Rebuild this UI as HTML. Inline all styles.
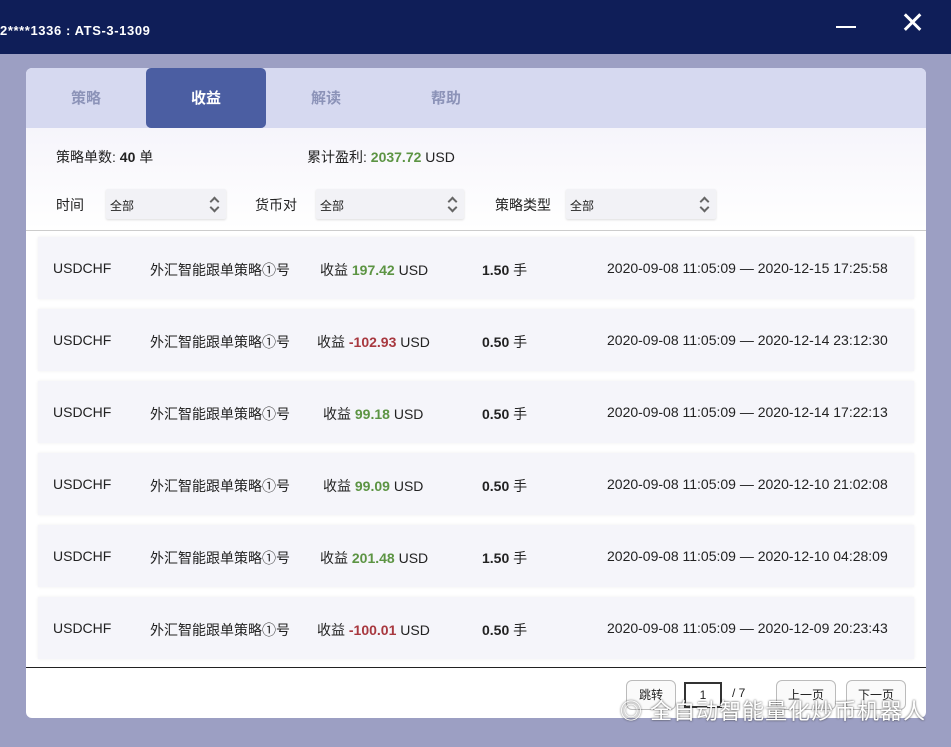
<!DOCTYPE html>
<html><head><meta charset="utf-8"><style>
*{margin:0;padding:0;box-sizing:border-box}
body{width:951px;height:747px;background:#9c9fc3;font-family:"Liberation Sans","Noto Sans CJK SC",sans-serif;position:relative;overflow:hidden;color:#222}
.top{position:absolute;left:0;top:0;width:951px;height:54px;background:#0f1e58;color:#fff;font-weight:bold;font-size:13px}
.top .t{position:absolute;left:0;top:23px;letter-spacing:0.6px}
.panel{position:absolute;left:26px;top:68px;width:900px;height:650px;background:#fff;border-radius:6px;overflow:hidden}
.tabs{height:60px;background:#d6d9f0;position:relative}
.tab{position:absolute;top:0;width:120px;height:60px;line-height:62px;text-align:center;color:#8c93b8;font-size:15px;font-weight:bold}
.tab.a{background:#4b5ea2;color:#fff;border-radius:5px}
.abs{position:absolute;font-size:14px}
.sel{position:absolute;top:121px;width:150px;height:30px;background:#f2f2f6;border-radius:2px;font-size:12px;padding:8px 4px;box-shadow:0 1px 2px #ddd}
.sel:after{content:"";position:absolute;right:8px;top:9px;width:5px;height:5px;border-left:2px solid #666;border-top:2px solid #666;transform:rotate(45deg)}
.sel:before{content:"";position:absolute;right:8px;top:15px;width:5px;height:5px;border-right:2px solid #666;border-bottom:2px solid #666;transform:rotate(45deg)}
.hdr{position:absolute;left:0;top:60px;width:900px;height:102px;background:linear-gradient(#f6f5fb,#fff)}
.row{position:absolute;left:12px;width:876px;height:62px;background:#f5f5fa;font-size:14px;box-shadow:0 0 3px #eee}
.row span{position:absolute;top:23px}
.g{color:#5c9443;font-weight:bold}.r{color:#a8383f;font-weight:bold}
.line{position:absolute;left:0;top:599px;width:900px;height:1px;background:#222}
.btn{position:absolute;top:612px;height:30px;border:1px solid #bbb;border-radius:6px;background:#fafafa;font-size:12px;text-align:center;line-height:28px}
.wm{position:absolute;left:620px;top:694px;font-size:22px;color:#fff;text-shadow:0 0 2px #333;letter-spacing:1px}
</style></head><body>
<div class="top"><span class="t">2****1336 : ATS-3-1309</span>
<span style="position:absolute;left:836px;top:26px;width:20px;height:2px;background:#fff"></span>
<span style="position:absolute;left:900px;top:6px;font-size:30px;font-weight:normal">✕</span></div>
<div class="panel">
<div class="tabs">
<div class="tab" style="left:0">策略</div>
<div class="tab a" style="left:120px">收益</div>
<div class="tab" style="left:240px">解读</div>
<div class="tab" style="left:360px">帮助</div>
</div>
<div class="hdr"></div>
<div class="abs" style="left:30px;top:79px">策略单数: <b>40</b> 单</div>
<div class="abs" style="left:281px;top:79px">累计盈利: <span class="g">2037.72</span> USD</div>
<div class="abs" style="left:30px;top:127px">时间</div>
<div class="sel" style="left:80px;width:120px">全部</div>
<div class="abs" style="left:229px;top:127px">货币对</div>
<div class="sel" style="left:290px;width:148px">全部</div>
<div class="abs" style="left:469px;top:127px">策略类型</div>
<div class="sel" style="left:540px">全部</div>
<div style="position:absolute;left:0;top:162px;width:900px;height:1px;background:#ccc"></div>

<div class="row" style="top:169px"><span style="left:15px">USDCHF</span><span style="left:112px">外汇智能跟单策略①号</span><span style="left:282px">收益 <b class="g">197.42</b> USD</span><span style="left:444px"><b>1.50</b> 手</span><span style="left:569px">2020-09-08 11:05:09 — 2020-12-15 17:25:58</span></div>
<div class="row" style="top:241px"><span style="left:15px">USDCHF</span><span style="left:112px">外汇智能跟单策略①号</span><span style="left:279px">收益 <b class="r">-102.93</b> USD</span><span style="left:444px"><b>0.50</b> 手</span><span style="left:569px">2020-09-08 11:05:09 — 2020-12-14 23:12:30</span></div>
<div class="row" style="top:313px"><span style="left:15px">USDCHF</span><span style="left:112px">外汇智能跟单策略①号</span><span style="left:285px">收益 <b class="g">99.18</b> USD</span><span style="left:444px"><b>0.50</b> 手</span><span style="left:569px">2020-09-08 11:05:09 — 2020-12-14 17:22:13</span></div>
<div class="row" style="top:385px"><span style="left:15px">USDCHF</span><span style="left:112px">外汇智能跟单策略①号</span><span style="left:285px">收益 <b class="g">99.09</b> USD</span><span style="left:444px"><b>0.50</b> 手</span><span style="left:569px">2020-09-08 11:05:09 — 2020-12-10 21:02:08</span></div>
<div class="row" style="top:457px"><span style="left:15px">USDCHF</span><span style="left:112px">外汇智能跟单策略①号</span><span style="left:282px">收益 <b class="g">201.48</b> USD</span><span style="left:444px"><b>1.50</b> 手</span><span style="left:569px">2020-09-08 11:05:09 — 2020-12-10 04:28:09</span></div>
<div class="row" style="top:529px"><span style="left:15px">USDCHF</span><span style="left:112px">外汇智能跟单策略①号</span><span style="left:279px">收益 <b class="r">-100.01</b> USD</span><span style="left:444px"><b>0.50</b> 手</span><span style="left:569px">2020-09-08 11:05:09 — 2020-12-09 20:23:43</span></div>

<div class="line"></div>
<div class="btn" style="left:600px;width:50px">跳转</div>
<div style="position:absolute;left:658px;top:614px;width:38px;height:26px;border:2px solid #333;font-size:12px;text-align:center;line-height:22px">1</div>
<div class="abs" style="left:706px;top:618px;font-size:12px">/ 7</div>
<div class="btn" style="left:750px;width:60px">上一页</div>
<div class="btn" style="left:820px;width:60px">下一页</div>
</div>
<div class="wm">◎ 全自动智能量化炒币机器人</div>
</body></html>
